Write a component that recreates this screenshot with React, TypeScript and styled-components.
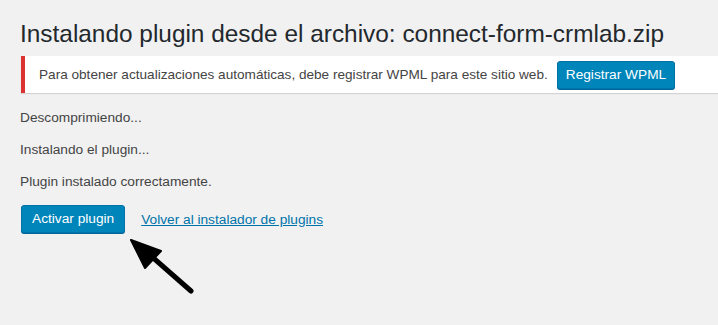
import React from 'react';
import styled, { createGlobalStyle } from 'styled-components';

const GlobalStyle = createGlobalStyle`
	html, body {
		margin: 0;
		padding: 0;
		background: #f1f1f1;
	}
	body {
		font-family: "Liberation Sans", Arial, sans-serif;
		color: #444;
		font-size: 13.7px;
	}
`;

const Wrap = styled.div`
	position: relative;
	height: 325px;
	padding: 19px 0 0 20px;
	box-sizing: border-box;
	overflow: hidden;
`;

const Title = styled.h1`
	margin: 0;
	font-size: 24.4px;
	font-weight: 400;
	line-height: 29px;
	color: #23282d;
`;

const Notice = styled.div`
	display: flex;
	align-items: center;
	gap: 9px;
	margin: 8px 0 0 1px;
	height: 37px;
	padding: 0 12px 0 14px;
	background: #fff;
	border-left: 4px solid #dc3232;
	box-shadow: 0 1px 1px rgba(0, 0, 0, 0.12);
`;

const NoticeText = styled.span`
	font-size: 13.6px;
	color: #444;
`;

const Button = styled.button<{ $pad?: number }>`
	height: 28px;
	padding: 0 ${(p) => p.$pad ?? 10}px 1px;
	font-family: inherit;
	font-size: 13.7px;
	line-height: 26px;
	color: #fff;
	background: #0085ba;
	border: 1px solid #0073aa;
	border-radius: 3px;
	box-shadow: 0 1px 0 #006799;
	cursor: pointer;
`;

const Step = styled.p<{ $first?: boolean }>`
	margin: ${(p) => (p.$first ? '15px 0 0' : '12px 0 0')};
	line-height: 20px;
`;

const Actions = styled.div`
	display: flex;
	align-items: center;
	gap: 16px;
	margin: 13px 0 0 1px;
`;

const Link = styled.a`
	color: #0073aa;
	text-decoration: underline;
`;

const Arrow = styled.svg`
	position: absolute;
	left: 125px;
	top: 233px;
`;

export default function App(): JSX.Element {
	return (
		<>
			<GlobalStyle />
			<Wrap>
				<Title>Instalando plugin desde el archivo: connect-form-crmlab.zip</Title>
				<Notice>
					<NoticeText>
						Para obtener actualizaciones automáticas, debe registrar WPML para este sitio web.
					</NoticeText>
					<Button $pad={8}>Registrar WPML</Button>
				</Notice>
				<Step $first>Descomprimiendo...</Step>
				<Step>Instalando el plugin...</Step>
				<Step>Plugin instalado correctamente.</Step>
				<Actions>
					<Button>Activar plugin</Button>
					<Link href="#">Volver al instalador de plugins</Link>
				</Actions>
				<Arrow width="75" height="68" viewBox="125 233 75 68">
					<line x1="191" y1="291" x2="150" y2="255" stroke="#000" strokeWidth="5" strokeLinecap="round" />
					<polygon points="131,240 161,251 145,268" fill="#000" stroke="#000" strokeWidth="2" strokeLinejoin="round" />
				</Arrow>
			</Wrap>
		</>
	);
}
